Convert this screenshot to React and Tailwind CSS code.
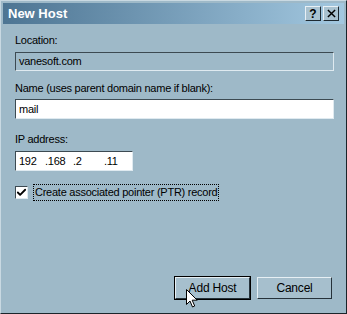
import { Check } from 'lucide-react';

const font = { fontFamily: '"Liberation Sans", Arial, sans-serif' };

const sunken = 'border-t border-l border-t-[#3c4a52] border-l-[#3c4a52] border-b border-r border-b-[#dfeaf0] border-r-[#dfeaf0]';

const TitleButton = ({ children }) => (
  <span className="flex h-[15px] w-[16px] items-center justify-center border border-t-[#e8f0f5] border-l-[#e8f0f5] border-b-[#1e2a32] border-r-[#1e2a32] bg-[#a9c2d0] text-[12px] font-bold leading-none text-black">
    {children}
  </span>
);

const Button = ({ children, isDefault }) => (
  <button
    type="button"
    className={`relative flex h-[22px] w-[75px] items-center justify-center bg-[#a6bfcd] text-[12px] tracking-[-0.2px] text-black ${isDefault ? 'outline outline-1 outline-black' : ''} border border-t-[#e6eff4] border-l-[#e6eff4] border-b-[#26323a] border-r-[#26323a]`}
  >
    {children}
    {isDefault && (
      // mouse pointer captured in the screenshot
      <svg viewBox="0 0 12 19" className="absolute left-[10px] top-[11px] h-[19px] w-[12px]">
        <path d="M0.5 0.5v15l3.5-3.5 2.5 6 2.2-1-2.5-5.8h5z" fill="white" stroke="black" strokeWidth="1" strokeLinejoin="round" />
      </svg>
    )}
  </button>
);

export default function App() {
  return (
    <div style={font} className="flex h-[314px] w-[347px] flex-col overflow-hidden border border-t-[#c9d9e2] border-l-[#c9d9e2] border-b-[#1a242a] border-r-[#1a242a] bg-[#9eb9c8]">
      <div className="mx-[2px] mt-[2px] flex h-[21px] items-center justify-between bg-gradient-to-r from-[#4d7593] to-[#a3c8e0] pl-[5px] pr-[5px]">
        <span className="text-[13px] font-bold text-white">New Host</span>
        <div className="flex gap-[2px]">
          <TitleButton>?</TitleButton>
          <TitleButton>
            <svg viewBox="0 0 10 10" className="h-[9px] w-[9px]" stroke="black" strokeWidth="1.6">
              <path d="M1 1 9 9M9 1 1 9" />
            </svg>
          </TitleButton>
        </div>
      </div>

      <div className="flex flex-1 flex-col px-[14px] pt-[9px] text-[11px] tracking-[-0.25px] text-black">
        <label className="leading-[14px]">Location:</label>
        <div className={`mt-[5px] flex h-[19px] w-[319px] items-center px-[3px] ${sunken}`}>vanesoft.com</div>

        <label className="mt-[10px] leading-[14px]">Name (uses parent domain name if blank):</label>
        <div className={`mt-[4px] flex h-[20px] w-[319px] items-center bg-white px-[3px] ${sunken}`}>mail</div>

        <label className="mt-[13px] leading-[14px]">IP address:</label>
        <div className={`mt-[5px] flex h-[20px] w-[118px] items-center bg-white px-[3px] ${sunken}`}>
          <span className="w-[26px]">192</span>
          <span className="w-[28px]">.168</span>
          <span className="w-[31px]">.2</span>
          <span>.11</span>
        </div>

        <div className="mt-[13px] flex items-center gap-[5px]">
          <span className={`flex h-[13px] w-[13px] items-center justify-center bg-white ${sunken}`}>
            <Check className="h-[11px] w-[11px]" strokeWidth={4} color="black" />
          </span>
          <span className="border border-dotted border-black px-[1px] leading-[15px]">Create associated pointer (PTR) record</span>
        </div>

        <div className="mt-auto mb-[14px] flex justify-end gap-[7px]">
          <Button isDefault>Add Host</Button>
          <Button>Cancel</Button>
        </div>
      </div>
    </div>
  );
}
